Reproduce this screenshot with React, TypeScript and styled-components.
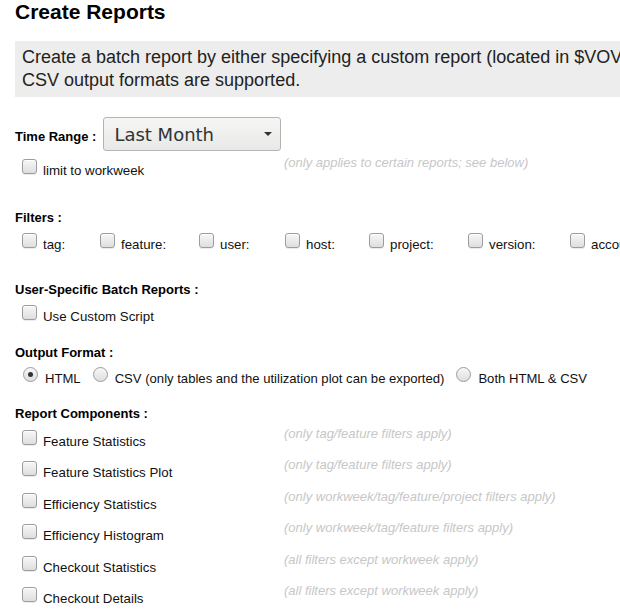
import React from "react";
import styled, { createGlobalStyle } from "styled-components";

const Global = createGlobalStyle`
  html, body { margin: 0; padding: 0; overflow: hidden; background: #fff; }
  body {
    font-family: "Liberation Sans", Arial, Helvetica, sans-serif;
    font-size: 13px;
    color: #000;
  }
`;

const Page = styled.div`
  width: 900px;
  padding-left: 15px;
  display: flex;
  flex-direction: column;
  align-items: flex-start;
`;

const Title = styled.h2`
  margin: 0;
  font-size: 21px;
  line-height: 24px;
  font-weight: bold;
  color: #000;
`;

const Info = styled.div`
  align-self: stretch;
  margin-top: 17px;
  background: #ededed;
  padding: 5px 7px;
  font-size: 18px;
  line-height: 23px;
  color: #222;
  white-space: nowrap;
`;

const TimeRow = styled.div`
  margin-top: 20px;
  height: 34px;
  display: flex;
  align-items: center;
`;

const FieldLabel = styled.span`
  font-weight: bold;
  padding-top: 5px;
  margin-right: 7px;
`;

const Select = styled.div`
  box-sizing: border-box;
  width: 178px;
  height: 34px;
  border: 1px solid #b4b4b4;
  border-radius: 3px;
  background: linear-gradient(#f6f6f5, #e8e8e7);
  display: flex;
  align-items: center;
  justify-content: space-between;
  padding: 0 8px 0 10px;
  font-family: "DejaVu Sans", sans-serif;
  font-size: 18px;
  color: #2e3436;
`;

const Caret = styled.span`
  width: 0;
  height: 0;
  border-left: 4px solid transparent;
  border-right: 4px solid transparent;
  border-top: 4px solid #2e3436;
`;

const Heading = styled.div<{ $mt: number }>`
  margin-top: ${(p) => p.$mt}px;
  font-weight: bold;
  line-height: 15px;
`;

const Row = styled.div<{ $mt: number }>`
  margin-top: ${(p) => p.$mt}px;
  height: 16px;
  display: flex;
  align-items: flex-start;
  white-space: nowrap;
`;

const LeftCell = styled.div`
  width: 269px;
  flex-shrink: 0;
  display: flex;
  align-items: flex-start;
`;

const FilterItem = styled.div<{ $w?: number }>`
  width: ${(p) => (p.$w ? `${p.$w}px` : "auto")};
  flex-shrink: 0;
  display: flex;
  align-items: flex-start;
`;

const CheckBox = styled.span`
  box-sizing: border-box;
  width: 15px;
  height: 15px;
  margin-left: 7px;
  margin-right: 6px;
  flex-shrink: 0;
  border: 1px solid #9c9c9c;
  border-radius: 3px;
  background: linear-gradient(#f7f7f7, #dedede);
  box-shadow: inset 0 1px 0 #fff, 0 1px 0 rgba(0, 0, 0, 0.08);
`;

const RadioItem = styled.div<{ $first?: boolean }>`
  display: flex;
  align-items: flex-start;
  margin-left: ${(p) => (p.$first ? 8 : 12)}px;
`;

const Radio = styled.span<{ $on?: boolean }>`
  box-sizing: border-box;
  width: 15px;
  height: 15px;
  margin-right: 7px;
  flex-shrink: 0;
  border: 1px solid #9c9c9c;
  border-radius: 50%;
  background: linear-gradient(#f7f7f7, #dedede);
  display: flex;
  align-items: center;
  justify-content: center;
  &::after {
    content: "";
    width: 5px;
    height: 5px;
    border-radius: 50%;
    background: ${(p) => (p.$on ? "#2e3436" : "transparent")};
  }
`;

const Label = styled.span<{ $size?: number }>`
  padding-top: 4px;
  font-size: ${(p) => p.$size ?? 13.3}px;
  line-height: 15px;
  color: #111;
`;

const Hint = styled.span`
  margin-top: -4px;
  font-size: 13px;
  line-height: 15px;
  font-style: italic;
  color: #c7c7c7;
`;

const filters: [string, number?][] = [
  ["tag:", 78],
  ["feature:", 99],
  ["user:", 86],
  ["host:", 84],
  ["project:", 99],
  ["version:", 102],
  ["account:"],
];

const components: [string, string][] = [
  ["Feature Statistics", "(only tag/feature filters apply)"],
  ["Feature Statistics Plot", "(only tag/feature filters apply)"],
  ["Efficiency Statistics", "(only workweek/tag/feature/project filters apply)"],
  ["Efficiency Histogram", "(only workweek/tag/feature filters apply)"],
  ["Checkout Statistics", "(all filters except workweek apply)"],
  ["Checkout Details", "(all filters except workweek apply)"],
];

export default function App() {
  return (
    <Page>
      <Global />
      <Title>Create Reports</Title>
      <Info>
        Create a batch report by either specifying a custom report (located in $VOVDIR/local/reports) or selecting report components below. Both HTML and
        <br />
        CSV output formats are supported.
      </Info>

      <TimeRow>
        <FieldLabel>Time Range :</FieldLabel>
        <Select>
          <span>Last Month</span>
          <Caret />
        </Select>
      </TimeRow>
      <Row $mt={8}>
        <LeftCell>
          <CheckBox />
          <Label>limit to workweek</Label>
        </LeftCell>
        <Hint>(only applies to certain reports; see below)</Hint>
      </Row>

      <Heading $mt={35}>Filters :</Heading>
      <Row $mt={8}>
        {filters.map(([name, w]) => (
          <FilterItem key={name} $w={w}>
            <CheckBox />
            <Label>{name}</Label>
          </FilterItem>
        ))}
      </Row>

      <Heading $mt={33}>User-Specific Batch Reports :</Heading>
      <Row $mt={8}>
        <LeftCell>
          <CheckBox />
          <Label>Use Custom Script</Label>
        </LeftCell>
      </Row>

      <Heading $mt={24}>Output Format :</Heading>
      <Row $mt={7}>
        <RadioItem $first>
          <Radio $on />
          <Label $size={13.1}>HTML</Label>
        </RadioItem>
        <RadioItem>
          <Radio />
          <Label $size={13.1}>CSV (only tables and the utilization plot can be exported)</Label>
        </RadioItem>
        <RadioItem>
          <Radio />
          <Label $size={13.1}>Both HTML &amp; CSV</Label>
        </RadioItem>
      </Row>

      <Heading $mt={23}>Report Components :</Heading>
      {components.map(([name, hint], i) => (
        <Row key={name} $mt={i === 0 ? 9 : 15.4}>
          <LeftCell>
            <CheckBox />
            <Label>{name}</Label>
          </LeftCell>
          <Hint>{hint}</Hint>
        </Row>
      ))}
    </Page>
  );
}
